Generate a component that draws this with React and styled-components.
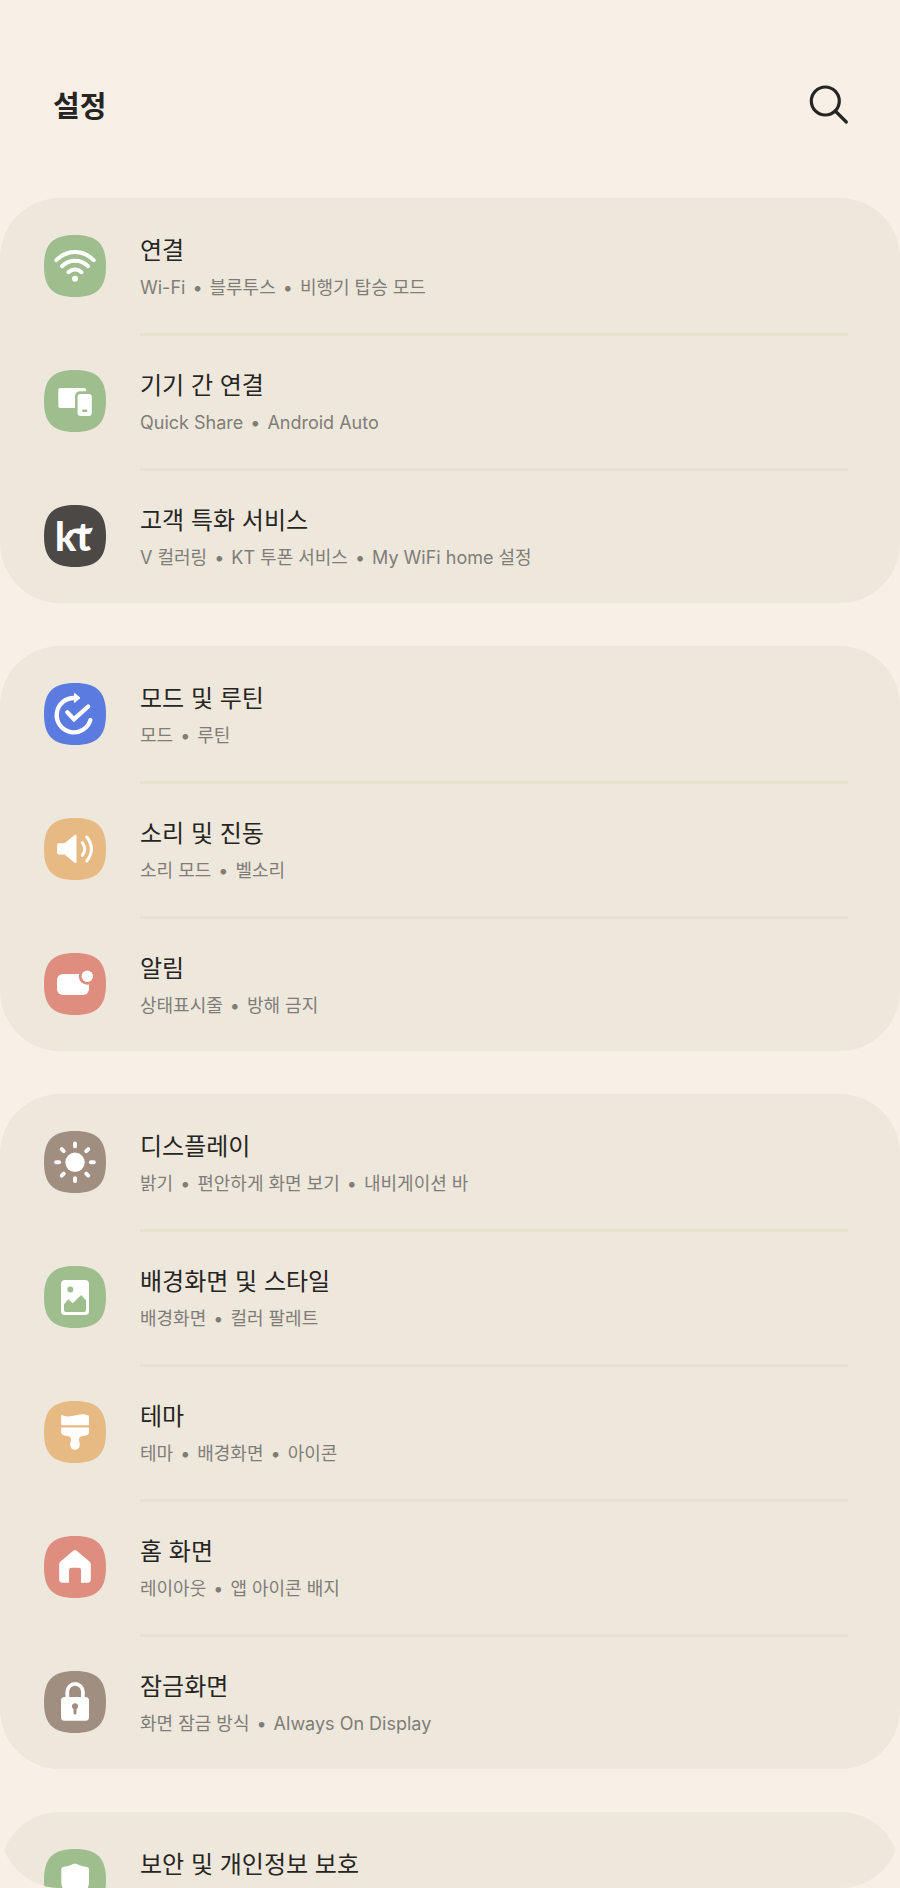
import React from "react";
import styled, { createGlobalStyle } from "styled-components";

const GlobalStyle = createGlobalStyle`
  *, *::before, *::after {
    box-sizing: border-box;
  }

  body {
    margin: 0;
    background: #f8f0e6;
    color: #262523;
    font-family: Inter, "Noto Sans CJK KR", sans-serif;
  }
`;

const Screen = styled.div`
  display: flex;
  flex-direction: column;
  height: 100vh;
  overflow: hidden;
`;

const Header = styled.header`
  display: flex;
  flex: none;
  align-items: center;
  justify-content: space-between;
  height: 198px;
  padding: 16px 45px 0 53px;
`;

const PageTitle = styled.h1`
  margin: 0;
  font-size: 29px;
  line-height: 40px;
  font-weight: 700;
`;

const SearchButton = styled.button`
  display: flex;
  padding: 0;
  border: 0;
  background: none;
  color: inherit;
  cursor: pointer;
`;

const List = styled.main`
  display: flex;
  flex: 1;
  flex-direction: column;
  gap: 43px;
  min-height: 0;
  overflow-y: auto;
  scrollbar-width: none;
  border-radius: 0 0 60px 60px;
`;

const Group = styled.section`
  flex: none;
  border-radius: 60px;
  background: #eee7db;
`;

const Row = styled.a`
  display: flex;
  gap: 34px;
  min-height: 135px;
  padding: 0 52px 0 44px;
  color: inherit;
  text-decoration: none;
`;

const Badge = styled.svg`
  flex: none;
  width: 62px;
  height: 62px;
  margin-top: 37px;
  color: ${(props) => props.$color};
`;

const RowText = styled.div`
  flex: 1;
  min-width: 0;
  padding: 34px 0 30px;
  border-top: 3px solid #e7e0d3;

  ${Row}:first-child & {
    border-top-color: transparent;
  }
`;

const RowTitle = styled.h2`
  margin: 0;
  font-size: 24px;
  line-height: 32px;
  font-weight: 400;
`;

const RowDetail = styled.p`
  display: flex;
  gap: 7px;
  margin: 6px 0 0;
  color: #807d78;
  font-size: 18px;
  line-height: 30px;
`;

const GREEN = "#9ebe8e";
const ORANGE = "#e6ba82";
const CORAL = "#de8d7f";
const BROWN = "#a08e80";

// White shapes on a 62 x 62 badge. currentColor is the badge colour.
const glyphs = {
  wifi: (
    <>
      <g fill="none" stroke="#fff" strokeWidth="4" strokeLinecap="round">
        <path d="M12.3 25.2C23 14.4 39 14.4 49.7 25.2" />
        <path d="M18 31.2C25.5 24 36.5 24 44 31.2" />
        <path d="M24.4 37.2C28.3 33.6 33.7 33.6 37.6 37.2" />
      </g>
      <circle cx="31" cy="43.8" r="3" fill="#fff" />
    </>
  ),
  devices: (
    <>
      <rect x="14.3" y="18" width="27.9" height="20" rx="2" fill="#fff" />
      <rect x="31" y="21.3" width="19.5" height="27" rx="5" fill="currentColor" />
      <rect x="33.6" y="24" width="14.2" height="22" rx="3" fill="#fff" />
      <rect x="38" y="39.4" width="5.4" height="2.6" rx="1.3" fill="currentColor" />
    </>
  ),
  kt: (
    <>
      <text x="11" y="46" fill="#fff" fontFamily="Lato, sans-serif" fontWeight="900" fontSize="39">
        kt
      </text>
      <path d="M22 29C27 24 30 23 37 23.5C42 24 46 23.5 48.7 22.5C48.5 27 46 28.5 40 28.5C32 28.5 27 27 22 29Z" fill="#fff" />
    </>
  ),
  routine: (
    <>
      <g fill="none" stroke="#fff" strokeWidth="4.3" strokeLinecap="round">
        <path d="M30.5 15A17.2 17.2 0 1 0 46.4 37" />
        <path d="M23.3 29.2L30 36.2L44.2 23.5" />
      </g>
      <path d="M30 10.5Q30 9.5 31 10.2L35.9 14.3Q36.4 14.9 35.9 15.5L31 19.6Q30 20.3 30 19.2Z" fill="#fff" />
    </>
  ),
  sound: (
    <>
      <path d="M15 25.3H20.5L30.7 17Q32.5 15.7 32.5 18V43.7Q32.5 46 30.7 44.7L20.5 36.6H15Q13 36.6 13 34.6V27.3Q13 25.3 15 25.3Z" fill="#fff" />
      <g fill="none" stroke="#fff" strokeWidth="3" strokeLinecap="round">
        <path d="M38.3 24.7Q43.2 31 38.3 37.3" />
        <path d="M42.7 19Q52.2 31 42.7 43" />
      </g>
    </>
  ),
  notification: (
    <>
      <rect x="13" y="21" width="32" height="21" rx="6" fill="#fff" />
      <circle cx="43.3" cy="23.3" r="8.5" fill="currentColor" />
      <circle cx="43.3" cy="23.3" r="5.7" fill="#fff" />
    </>
  ),
  display: (
    <>
      <circle cx="31" cy="31.3" r="9.7" fill="#fff" />
      <g stroke="#fff" strokeWidth="3.9" strokeLinecap="round">
        {[0, 45, 90, 135, 180, 225, 270, 315].map((angle) => (
          <path key={angle} d="M31 12.5V15.4" transform={`rotate(${angle} 31 31.3)`} />
        ))}
      </g>
    </>
  ),
  wallpaper: (
    <>
      <rect x="17" y="14" width="28" height="35" rx="4" fill="#fff" />
      <circle cx="26.3" cy="23.4" r="3" fill="currentColor" />
      <path d="M20 38.3L24.3 33.3L28.7 37.3L37.2 29L42 34.5V44Q42 46 40 46H22Q20 46 20 44Z" fill="currentColor" />
    </>
  ),
  theme: (
    <>
      <path d="M17.2 15Q17.2 13.8 18.5 14.2C23 16 27 15.5 32 14.3C37 13 40.5 13 44 14.2Q45 14.5 45 15.5V24.2H17.2Z" fill="#fff" />
      <path d="M17.2 26.5H45V31Q45 34 41.5 34.5C37 35 35 36 35 38.5C35 40.5 35.8 42 35.8 44A4.8 4.8 0 0 1 26.2 44C26.2 42 27 40.5 27 38.5C27 36 25 35 20.7 34.5Q17.2 34 17.2 31Z" fill="#fff" />
    </>
  ),
  home: (
    <path d="M29.6 14.5Q31 13.4 32.4 14.5L45.5 25.4Q46.8 26.5 46.8 28.2V43.2Q46.8 46.8 43.2 46.8H37V34.2Q37 31.7 34.5 31.7H27.5Q25 31.7 25 34.2V46.8H18.8Q15.2 46.8 15.2 43.2V28.2Q15.2 26.5 16.5 25.4Z" fill="#fff" />
  ),
  lock: (
    <>
      <path d="M23.3 28V20.7A7.8 7.8 0 0 1 38.9 20.7V28" fill="none" stroke="#fff" strokeWidth="3.7" />
      <rect x="17" y="26" width="28" height="23.7" rx="3.5" fill="#fff" />
      <circle cx="31" cy="35.3" r="3" fill="currentColor" />
      <path d="M31 36V42" stroke="currentColor" strokeWidth="3" strokeLinecap="round" />
    </>
  ),
  shield: (
    <path d="M30 14.8Q31 14.3 32 14.8Q37 17.3 43 18Q45 18.3 45 20V33Q45 44 31 50Q17.3 44 17.3 33V20Q17.3 18.3 19 18Q25 17.3 30 14.8Z" fill="#fff" />
  ),
};

const groups = [
  [
    { icon: "wifi", color: GREEN, title: "연결", details: ["Wi-Fi", "블루투스", "비행기 탑승 모드"] },
    { icon: "devices", color: GREEN, title: "기기 간 연결", details: ["Quick Share", "Android Auto"] },
    { icon: "kt", color: "#4c4846", title: "고객 특화 서비스", details: ["V 컬러링", "KT 투폰 서비스", "My WiFi home 설정"] },
  ],
  [
    { icon: "routine", color: "#5b7be0", title: "모드 및 루틴", details: ["모드", "루틴"] },
    { icon: "sound", color: ORANGE, title: "소리 및 진동", details: ["소리 모드", "벨소리"] },
    { icon: "notification", color: CORAL, title: "알림", details: ["상태표시줄", "방해 금지"] },
  ],
  [
    { icon: "display", color: BROWN, title: "디스플레이", details: ["밝기", "편안하게 화면 보기", "내비게이션 바"] },
    { icon: "wallpaper", color: GREEN, title: "배경화면 및 스타일", details: ["배경화면", "컬러 팔레트"] },
    { icon: "theme", color: ORANGE, title: "테마", details: ["테마", "배경화면", "아이콘"] },
    { icon: "home", color: CORAL, title: "홈 화면", details: ["레이아웃", "앱 아이콘 배지"] },
    { icon: "lock", color: BROWN, title: "잠금화면", details: ["화면 잠금 방식", "Always On Display"] },
  ],
  [{ icon: "shield", color: GREEN, title: "보안 및 개인정보 보호", details: [] }],
];

function SettingRow({ icon, color, title, details }) {
  return (
    <Row href={`#${icon}`}>
      <Badge $color={color} viewBox="0 0 62 62" aria-hidden="true">
        <path d="M31 0C53 0 62 9 62 31S53 62 31 62 0 53 0 31 9 0 31 0Z" fill="currentColor" />
        {glyphs[icon]}
      </Badge>
      <RowText>
        <RowTitle>{title}</RowTitle>
        {details.length > 0 && (
          <RowDetail>
            {details.map((detail, i) => (
              <React.Fragment key={detail}>
                {i > 0 && <span>•</span>}
                <span>{detail}</span>
              </React.Fragment>
            ))}
          </RowDetail>
        )}
      </RowText>
    </Row>
  );
}

export default function App() {
  return (
    <>
      <GlobalStyle />
      <Screen>
        <Header>
          <PageTitle>설정</PageTitle>
          <SearchButton type="button" aria-label="검색">
            <svg width="52" height="52" viewBox="0 0 52 52" fill="none" stroke="currentColor" strokeWidth="3.2" strokeLinecap="round">
              <circle cx="22.3" cy="20" r="14" />
              <path d="M32.3 30L43.3 41" />
            </svg>
          </SearchButton>
        </Header>
        <List>
          {groups.map((rows) => (
            <Group key={rows[0].icon}>
              {rows.map((row) => (
                <SettingRow key={row.icon} {...row} />
              ))}
            </Group>
          ))}
        </List>
      </Screen>
    </>
  );
}
